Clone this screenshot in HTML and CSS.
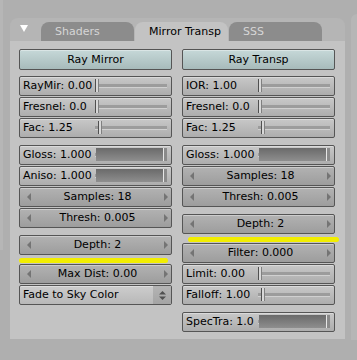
FILE: index.html
```html
<!DOCTYPE html>
<html>
<head>
<meta charset="utf-8">
<link rel="stylesheet" href="styles.css">
</head>
<body>
<div class="strip-left"></div>
<div class="panel">
  <div class="header">
    <svg class="tri" width="8" height="8" viewBox="0 0 8 8"><polygon points="0,0 8,0 4,7" fill="#ffffff"/></svg>
    <div class="tab">Shaders</div>
    <div class="tab active">Mirror Transp</div>
    <div class="tab">SSS</div>
  </div>
  <div class="body">
    <div class="col">
      <div class="btn toggle">Ray Mirror</div>
      <div class="group">
        <div class="btn slider"><span class="lbl">RayMir: 0.00</span><span class="track"><i class="handle" style="left:0%"></i></span></div>
        <div class="btn slider"><span class="lbl">Fresnel: 0.0</span><span class="track"><i class="handle" style="left:0%"></i></span></div>
        <div class="btn slider"><span class="lbl">Fac: 1.25</span><span class="track"><i class="handle" style="left:4%"></i></span></div>
      </div>
      <div class="group">
        <div class="btn slider"><span class="lbl">Gloss: 1.000</span><span class="track"><b class="fill"></b></span></div>
        <div class="btn slider"><span class="lbl">Aniso: 1.000</span><span class="track"><b class="fill"></b></span></div>
        <div class="btn num"><i class="al"></i><span class="nt">Samples: 18</span><i class="ar"></i></div>
        <div class="btn num"><i class="al"></i><span class="nt">Thresh: 0.005</span><i class="ar"></i></div>
      </div>
      <div class="group">
        <div class="btn num"><i class="al"></i><span class="nt">Depth: 2</span><i class="ar"></i></div>
      </div>
      <div class="mark mark-left"></div>
      <div class="group">
        <div class="btn num"><i class="al"></i><span class="nt">Max Dist: 0.00</span><i class="ar"></i></div>
        <div class="btn menu"><span class="mt">Fade to Sky Color</span><span class="mi"><svg width="7" height="9" viewBox="0 0 7 9"><polygon points="0,3.5 7,3.5 3.5,0" fill="#505050"/><polygon points="0,5.5 7,5.5 3.5,9" fill="#505050"/></svg></span></div>
      </div>
    </div>
    <div class="col">
      <div class="btn toggle">Ray Transp</div>
      <div class="group">
        <div class="btn slider"><span class="lbl">IOR: 1.00</span><span class="track"><i class="handle" style="left:0%"></i></span></div>
        <div class="btn slider"><span class="lbl">Fresnel: 0.0</span><span class="track"><i class="handle" style="left:0%"></i></span></div>
        <div class="btn slider"><span class="lbl">Fac: 1.25</span><span class="track"><i class="handle" style="left:4%"></i></span></div>
      </div>
      <div class="group">
        <div class="btn slider"><span class="lbl">Gloss: 1.000</span><span class="track"><b class="fill"></b></span></div>
        <div class="btn num"><i class="al"></i><span class="nt">Samples: 18</span><i class="ar"></i></div>
        <div class="btn num"><i class="al"></i><span class="nt">Thresh: 0.005</span><i class="ar"></i></div>
      </div>
      <div class="group">
        <div class="btn num"><i class="al"></i><span class="nt">Depth: 2</span><i class="ar"></i></div>
      </div>
      <div class="mark mark-right"></div>
      <div class="group">
        <div class="btn num"><i class="al"></i><span class="nt">Filter: 0.000</span><i class="ar"></i></div>
        <div class="btn slider"><span class="lbl">Limit: 0.00</span><span class="track"><i class="handle" style="left:0%"></i></span></div>
        <div class="btn slider"><span class="lbl">Falloff: 1.00</span><span class="track"><i class="handle" style="left:4%"></i></span></div>
      </div>
      <div class="group">
        <div class="btn slider"><span class="lbl">SpecTra: 1.0</span><span class="track"><b class="fill"></b></span></div>
      </div>
    </div>
  </div>
</div>
<div class="strip-right"></div>
</body>
</html>
```
FILE: styles.css
```css
html, body {
  margin: 0;
  padding: 0;
}
body {
  width: 357px;
  height: 360px;
  background: #afafaf;
  display: flex;
  align-items: flex-start;
  font-family: "DejaVu Sans", "Noto Sans", sans-serif;
  font-size: 11px;
  color: #000;
  overflow: hidden;
}
.strip-left {
  width: 3px;
  height: 250px;
  background: #b6b6b6;
  margin-right: 7px;
}
.strip-right {
  width: 6px;
  height: 326px;
  margin-top: 14px;
  margin-left: 6px;
  background: #b6b6b6;
  border-top-left-radius: 6px;
}
.panel {
  width: 335px;
  height: 321px;
  margin-top: 18px;
  display: flex;
  flex-direction: column;
}
.header {
  height: 23px;
  background: #b5b5b5;
  border-radius: 8px 8px 0 0;
  display: flex;
  align-items: flex-end;
  padding-left: 10px;
}
.tri {
  align-self: flex-start;
  margin-top: 7px;
  margin-right: 13px;
}
.tab {
  width: 79px;
  height: 19px;
  padding-left: 14px;
  margin-right: 1px;
  background: #8c8c8c;
  color: #d6d6d6;
  border-radius: 8px 8px 0 0;
  line-height: 20px;
  white-space: nowrap;
  overflow: hidden;
}
.tab.active {
  background: #c3c3c3;
  color: #000;
}
.body {
  flex: 1;
  background: #c3c3c3;
  display: flex;
  gap: 10px;
  padding: 8px 10px 0 9px;
}
.col {
  width: 153px;
  display: flex;
  flex-direction: column;
}
.group {
  display: flex;
  flex-direction: column;
  margin-top: 5px;
}
.group + .group {
  margin-top: 6px;
}
.mark + .group {
  margin-top: 1px;
}
.btn {
  box-sizing: border-box;
  height: 20px;
  margin-bottom: 1px;
  border: 1px solid #555;
  border-radius: 2px;
  line-height: 18px;
  white-space: nowrap;
  box-shadow: inset 0 1px 0 rgba(255,255,255,0.35);
}
.toggle {
  background: linear-gradient(#c6d8d8, #a7bbbb);
  text-align: center;
  height: 21px;
  line-height: 19px;
}
.slider {
  background: linear-gradient(#c8c8c8, #adadad);
  display: flex;
  align-items: center;
}
.lbl {
  width: 69px;
  padding-left: 3px;
  padding-right: 3px;
  overflow: hidden;
  flex: none;
}
.track {
  position: relative;
  flex: 1;
  height: 14px;
  margin-right: 4px;
}
.track::before {
  content: "";
  position: absolute;
  left: 0;
  right: 0;
  top: 5px;
  height: 3px;
  background: #9c9c9c;
  border-bottom: 1px solid #d0d0d0;
}
.handle {
  position: absolute;
  top: 0;
  width: 2px;
  height: 13px;
  background: #d8d8d8;
  border-left: 1px solid #505050;
  border-right: 1px solid #808080;
}
.fill {
  position: absolute;
  left: 1px;
  right: 0;
  top: 0;
  height: 13px;
  background: linear-gradient(#6a6a6a, #8e8e8e);
  box-shadow: inset -3px 0 0 #8a8a8a, inset -4px 0 0 #e6e6e6;
  z-index: 1;
}
.num {
  background: linear-gradient(#b2b2b2, #9d9d9d);
  display: flex;
  align-items: center;
  padding: 0 3px 0 7px;
}
.nt {
  flex: 1;
  text-align: center;
}
.al, .ar {
  width: 0;
  height: 0;
  border-top: 4px solid transparent;
  border-bottom: 4px solid transparent;
}
.al {
  border-right: 4px solid #747474;
}
.ar {
  border-left: 4px solid #747474;
}
.menu {
  background: linear-gradient(#cdcdcd, #b8b8b8);
  display: flex;
  align-items: stretch;
}
.mt {
  flex: 1;
  padding-left: 3px;
}
.mi {
  width: 18px;
  background: linear-gradient(#b4b4b4, #a4a4a4);
  display: flex;
  align-items: center;
  justify-content: center;
}
.mark {
  height: 5px;
  margin-top: 2px;
  background: #f2ee00;
  border-radius: 3px;
}
.mark-left {
  width: 149px;
}
.mark-right {
  margin-left: 6px;
  margin-right: -4px;
}
```
